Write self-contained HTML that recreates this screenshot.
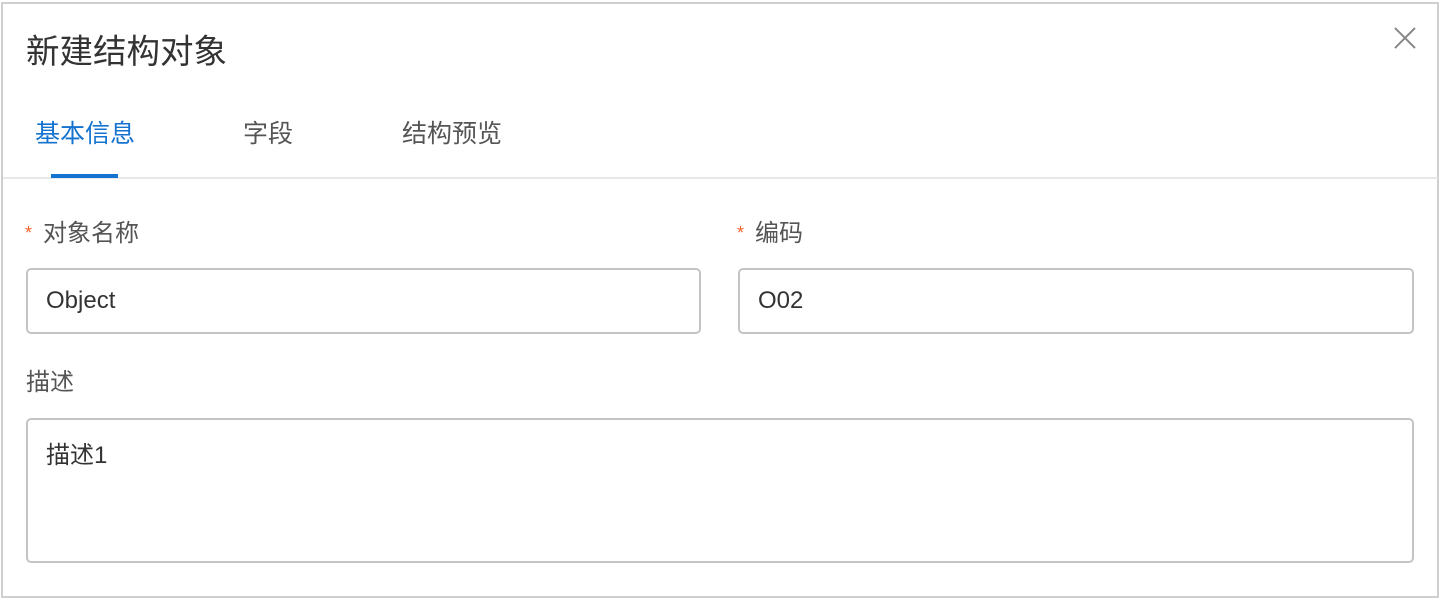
<!DOCTYPE html><html><head><meta charset="utf-8"><style>
body{margin:0;width:1441px;height:600px;background:#fff;font-family:"Liberation Sans","Noto Sans CJK SC",sans-serif;position:relative;overflow:hidden}
.a{position:absolute}
.box{position:absolute;border:2px solid #c4c4c4;border-radius:5px;box-sizing:border-box;font-size:24px;color:#333}
.lab{position:absolute;font-size:24px;color:#555;line-height:30px}
.st{color:#f5632d;font-size:18px;margin-right:11px;vertical-align:2px}
</style></head><body>
<div class="a" style="left:1px;top:2px;width:1438px;height:596px;border:2px solid #cfcfcf;box-sizing:border-box"></div>
<div class="a" style="left:26px;top:33px;font-size:33.5px;color:#333;line-height:40px">新建结构对象</div>
<svg class="a" style="left:1393px;top:26px" width="24" height="24"><path d="M2 2L22 22M22 2L2 22" stroke="#888" stroke-width="2"/></svg>
<div class="a" style="left:35px;top:119px;font-size:25px;color:#1473d0;line-height:30px">基本信息</div>
<div class="a" style="left:243px;top:119px;font-size:25px;color:#555;line-height:30px">字段</div>
<div class="a" style="left:402px;top:119px;font-size:25px;color:#555;line-height:30px">结构预览</div>
<div class="a" style="left:3px;top:177px;width:1435px;height:2px;background:#e6e8ea"></div>
<div class="a" style="left:51px;top:174px;width:67px;height:4px;background:#1473d0"></div>
<div class="lab" style="left:25px;top:218px"><span class="st">*</span>对象名称</div>
<div class="lab" style="left:737px;top:218px"><span class="st">*</span>编码</div>
<div class="box" style="left:26px;top:268px;width:675px;height:66px;padding:17px 0 0 18px">Object</div>
<div class="box" style="left:738px;top:268px;width:676px;height:66px;padding:17px 0 0 18px">O02</div>
<div class="lab" style="left:26px;top:368px">描述</div>
<div class="box" style="left:26px;top:418px;width:1388px;height:145px;padding:15px 0 0 18px">描述1</div>
</body></html>
